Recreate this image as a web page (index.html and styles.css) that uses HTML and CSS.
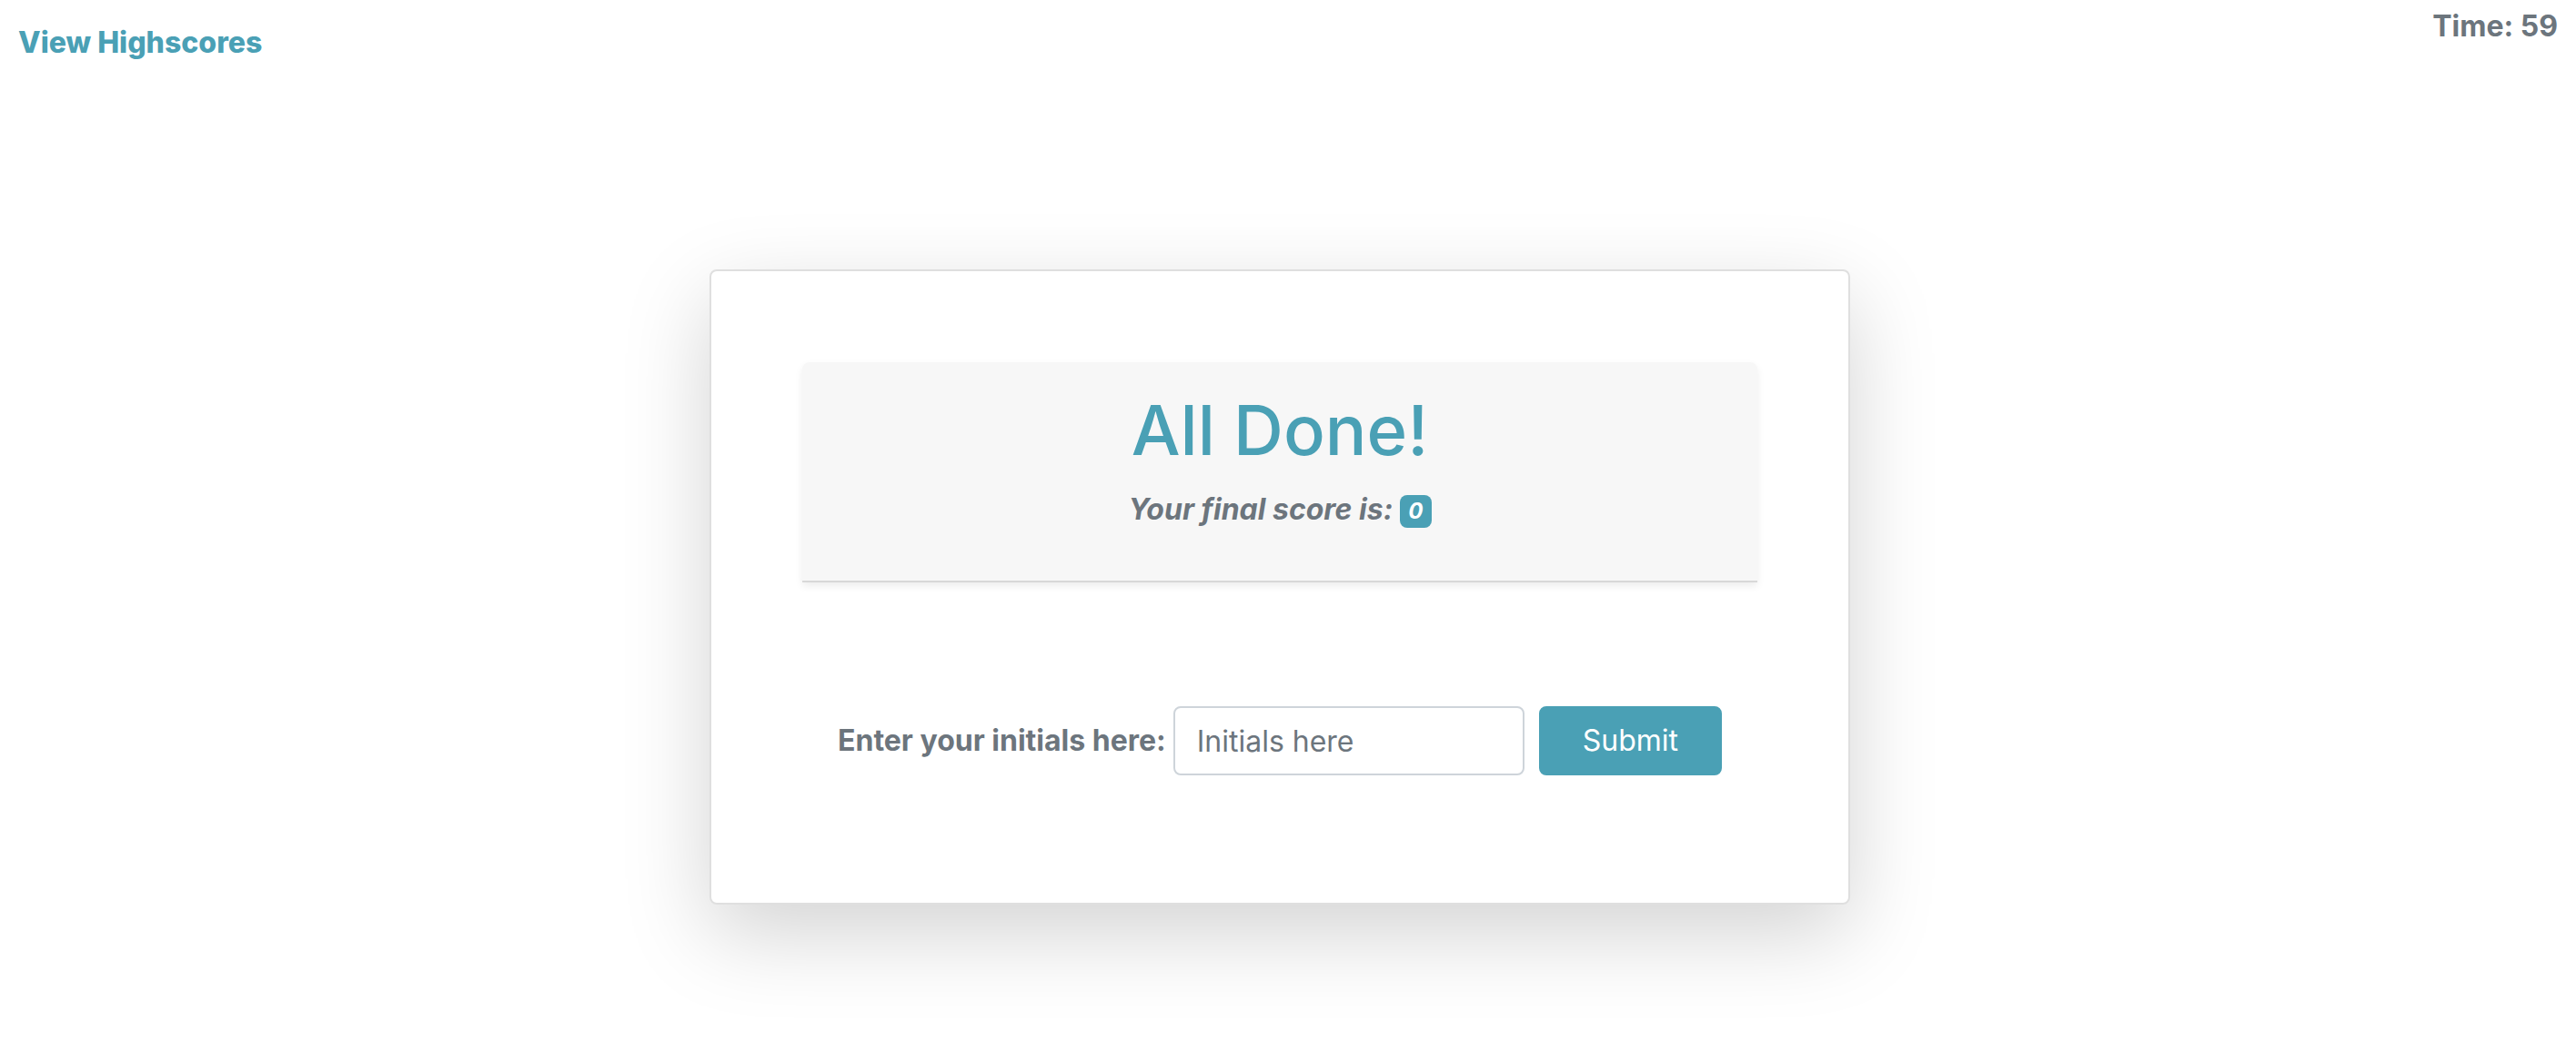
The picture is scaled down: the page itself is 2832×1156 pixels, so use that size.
FILE: index.html
```html
<!DOCTYPE html>
<html lang="en">
<head>
  <meta charset="utf-8">
  <title>Code Quiz</title>
  <link rel="stylesheet" href="styles.css">
</head>
<body>
  <header class="topbar">
    <a class="scores-link" href="#">View Highscores</a>
    <p class="timer">Time: <span>59</span></p>
  </header>
  <main class="page">
    <section class="card">
      <div class="card-header">
        <h1 class="title">All Done!</h1>
        <p class="score">Your final score is: <span class="badge">0</span></p>
      </div>
      <form class="initials-form">
        <label class="label" for="initials">Enter your initials here:</label>
        <input class="input" id="initials" type="text" placeholder="Initials here">
        <button class="submit" type="button">Submit</button>
      </form>
    </section>
  </main>
</body>
</html>
```
FILE: styles.css
```css
* {
  box-sizing: border-box;
}

body {
  margin: 0;
  background: #fff;
  color: #6c757d;
  font-family: Inter, "Liberation Sans", sans-serif;
  font-size: 32px;
  line-height: 48px;
}

.topbar {
  display: flex;
  justify-content: space-between;
  align-items: flex-start;
  padding: 5px 20px 0;
}

.scores-link {
  padding: 18px 0;
  color: #4aa0b5;
  font-weight: 800;
  text-decoration: none;
}

.timer {
  margin: 0;
  font-weight: 700;
}

.page {
  display: flex;
  justify-content: center;
  padding: 207px 18px 160px 0;
}

.card {
  width: 1254px;
  max-width: 100%;
  padding: 100px 100px 140px;
  border: 2px solid #dfdfdf;
  border-radius: 8px;
  background: #fff;
  box-shadow: 0 32px 96px rgba(0, 0, 0, 0.175);
}

.card-header {
  padding: 26px 40px 46px;
  border-bottom: 2px solid #d8d8d8;
  border-radius: 8px 8px 0 0;
  background: #f7f7f7;
  box-shadow: 0 4px 8px rgba(0, 0, 0, 0.075);
  text-align: center;
}

.title {
  margin: 0 0 16px;
  color: #4aa0b5;
  font-size: 76px;
  font-weight: 500;
  line-height: 96px;
}

.score {
  display: flex;
  justify-content: center;
  align-items: flex-end;
  gap: 8px;
  margin: 0;
  padding-bottom: 8px;
  font-style: italic;
  font-weight: 700;
}

.badge {
  margin-bottom: 4px;
  padding: 6px 9px;
  border-radius: 8px;
  background: #4aa0b5;
  color: #fff;
  font-size: 24px;
  line-height: 24px;
}

.initials-form {
  display: flex;
  flex-wrap: wrap;
  justify-content: center;
  align-items: center;
  padding-top: 136px;
}

.label {
  margin-right: 8px;
  font-weight: 700;
}

.input {
  width: 386px;
  height: 76px;
  margin: 0 16px 0 0;
  padding: 12px 24px;
  border: 2px solid #ced4da;
  border-radius: 8px;
  background: #fff;
  color: #495057;
  font: inherit;
}

.input::placeholder {
  color: #6c757d;
  opacity: 1;
}

.submit {
  padding: 12px 46px;
  border: 2px solid #4aa0b5;
  border-radius: 8px;
  background: #4aa0b5;
  color: #fff;
  font: inherit;
  cursor: pointer;
}
```
